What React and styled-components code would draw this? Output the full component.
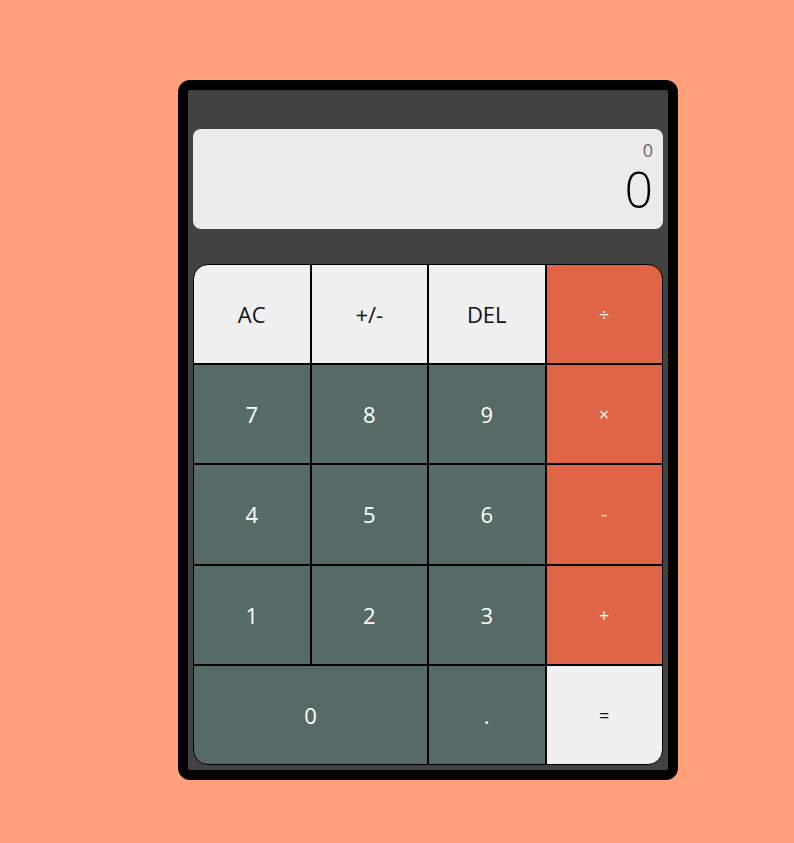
import React from 'react';
import styled, { createGlobalStyle } from 'styled-components';

const GlobalStyle = createGlobalStyle`
  body {
    margin: 0;
    background-color: #ffa07a;
    font-family: "Open Sans", "Noto Sans", sans-serif;
  }
`;

const Page = styled.div`
  min-height: 843px;
  padding-top: 80px;
  padding-left: 178px;
  box-sizing: border-box;
`;

const Body = styled.div`
  width: 500px;
  height: 700px;
  box-sizing: border-box;
  background-color: #424242;
  border: 10px solid #000;
  border-radius: 12px;
  padding: 39px 5px 5px 5px;
  display: flex;
  flex-direction: column;
`;

const Display = styled.div`
  height: 100px;
  background-color: #ebebeb;
  border-radius: 8px;
  padding: 12px 10px 0 0;
  box-sizing: border-box;
  display: flex;
  flex-direction: column;
  align-items: flex-end;
  gap: 5px;
  margin-bottom: 35px;
`;

const Previous = styled.div`
  font-size: 18px;
  line-height: 18px;
  color: #666;
`;

const Current = styled.div`
  font-size: 50px;
  line-height: 50px;
  font-weight: 300;
  color: #000;
`;

const Keypad = styled.div`
  display: grid;
  grid-template-columns: repeat(4, 1fr);
  grid-template-rows: repeat(5, 1fr);
  height: 501px;
`;

const colors = {
  light: { bg: '#f0f0f0', fg: '#111' },
  num: { bg: '#566a67', fg: '#fff' },
  op: { bg: '#e06446', fg: '#fff' },
};

const Key = styled.button`
  border: 1px solid #000;
  margin: 0;
  padding: 0;
  font-family: inherit;
  font-size: ${p => (p.small ? '18px' : '22px')};
  background-color: ${p => colors[p.kind].bg};
  color: ${p => colors[p.kind].fg};
  grid-column: ${p => (p.wide ? 'span 2' : 'auto')};
  border-radius: ${p => p.radius || '0'};
  cursor: pointer;
`;

const keys = [
  { label: 'AC', kind: 'light', radius: '15px 0 0 0' },
  { label: '+/-', kind: 'light' },
  { label: 'DEL', kind: 'light' },
  { label: '÷', kind: 'op', small: true, radius: '0 15px 0 0' },
  { label: '7', kind: 'num' },
  { label: '8', kind: 'num' },
  { label: '9', kind: 'num' },
  { label: '×', kind: 'op', small: true },
  { label: '4', kind: 'num' },
  { label: '5', kind: 'num' },
  { label: '6', kind: 'num' },
  { label: '-', kind: 'op', small: true },
  { label: '1', kind: 'num' },
  { label: '2', kind: 'num' },
  { label: '3', kind: 'num' },
  { label: '+', kind: 'op', small: true },
  { label: '0', kind: 'num', wide: true, radius: '0 0 0 15px' },
  { label: '.', kind: 'num' },
  { label: '=', kind: 'light', small: true, radius: '0 0 15px 0' },
];

export default function App() {
  return (
    <>
      <GlobalStyle />
      <Page>
        <Body>
          <Display>
            <Previous>0</Previous>
            <Current>0</Current>
          </Display>
          <Keypad>
            {keys.map(k => (
              <Key key={k.label} kind={k.kind} small={k.small} wide={k.wide} radius={k.radius}>
                {k.label}
              </Key>
            ))}
          </Keypad>
        </Body>
      </Page>
    </>
  );
}
